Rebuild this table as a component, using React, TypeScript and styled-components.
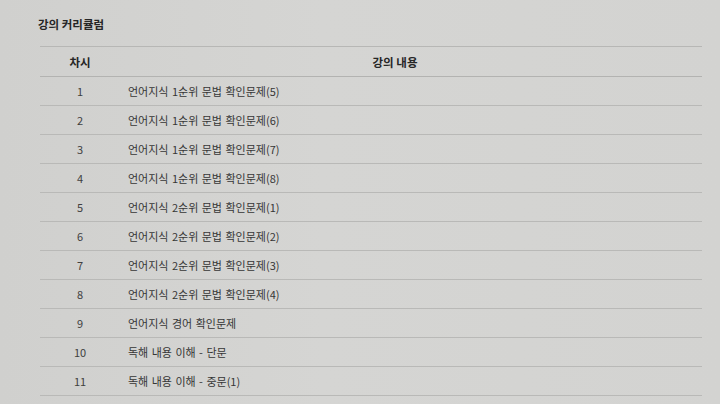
import React from 'react'
import styled, { createGlobalStyle } from 'styled-components'

const GlobalStyle = createGlobalStyle`
  html, body {
    margin: 0;
    padding: 0;
    background: #d3d3d1;
  }
  body {
    font-family: "Noto Sans CJK KR", "Noto Sans", sans-serif;
    color: #3a3a3a;
  }
`

const Page = styled.div`
  width: 720px;
  height: 404px;
  overflow: hidden;
  padding: 14px 18px 0 38px;
  box-sizing: border-box;
  background: linear-gradient(90deg, #d0d0ce 0%, #d5d5d3 45%, #d3d3d1 100%);
`

const Title = styled.h2`
  margin: 0 0 12px 0;
  font-size: 11.5px;
  font-weight: 700;
  line-height: 20px;
  color: #262626;
`

const Table = styled.table`
  width: 662px;
  margin-left: 2px;
  border-collapse: collapse;
  font-size: 11px;
`

const HeadCell = styled.th<{ $wide?: boolean }>`
  height: 29px;
  padding: 0 ${p => (p.$wide ? '32px' : '0')} 0 0;
  border-top: 1px solid #b7b7b5;
  border-bottom: 1px solid #b3b3b1;
  font-weight: 700;
  font-size: 11.5px;
  color: #262626;
  text-align: center;
  width: ${p => (p.$wide ? 'auto' : '80px')};
`

const Row = styled.tr`
  height: 29px;
  border-bottom: 1px solid #b9b9b7;
`

const NumCell = styled.td`
  text-align: center;
  color: #404040;
  padding: 0;
`

const TextCell = styled.td`
  text-align: left;
  padding: 0 0 0 8px;
  color: #363636;
  word-spacing: 1px;
`

const lessons = [
  '언어지식 1순위 문법 확인문제(5)',
  '언어지식 1순위 문법 확인문제(6)',
  '언어지식 1순위 문법 확인문제(7)',
  '언어지식 1순위 문법 확인문제(8)',
  '언어지식 2순위 문법 확인문제(1)',
  '언어지식 2순위 문법 확인문제(2)',
  '언어지식 2순위 문법 확인문제(3)',
  '언어지식 2순위 문법 확인문제(4)',
  '언어지식 경어 확인문제',
  '독해 내용 이해 - 단문',
  '독해 내용 이해 - 중문(1)',
]

const App: React.FC = () => {
  return (
    <Page>
      <GlobalStyle />
      <Title>강의 커리큘럼</Title>
      <Table>
        <thead>
          <tr>
            <HeadCell>차시</HeadCell>
            <HeadCell $wide>강의 내용</HeadCell>
          </tr>
        </thead>
        <tbody>
          {lessons.map((title, i) => (
            <Row key={i}>
              <NumCell>{i + 1}</NumCell>
              <TextCell>{title}</TextCell>
            </Row>
          ))}
        </tbody>
      </Table>
    </Page>
  )
}

export default App
